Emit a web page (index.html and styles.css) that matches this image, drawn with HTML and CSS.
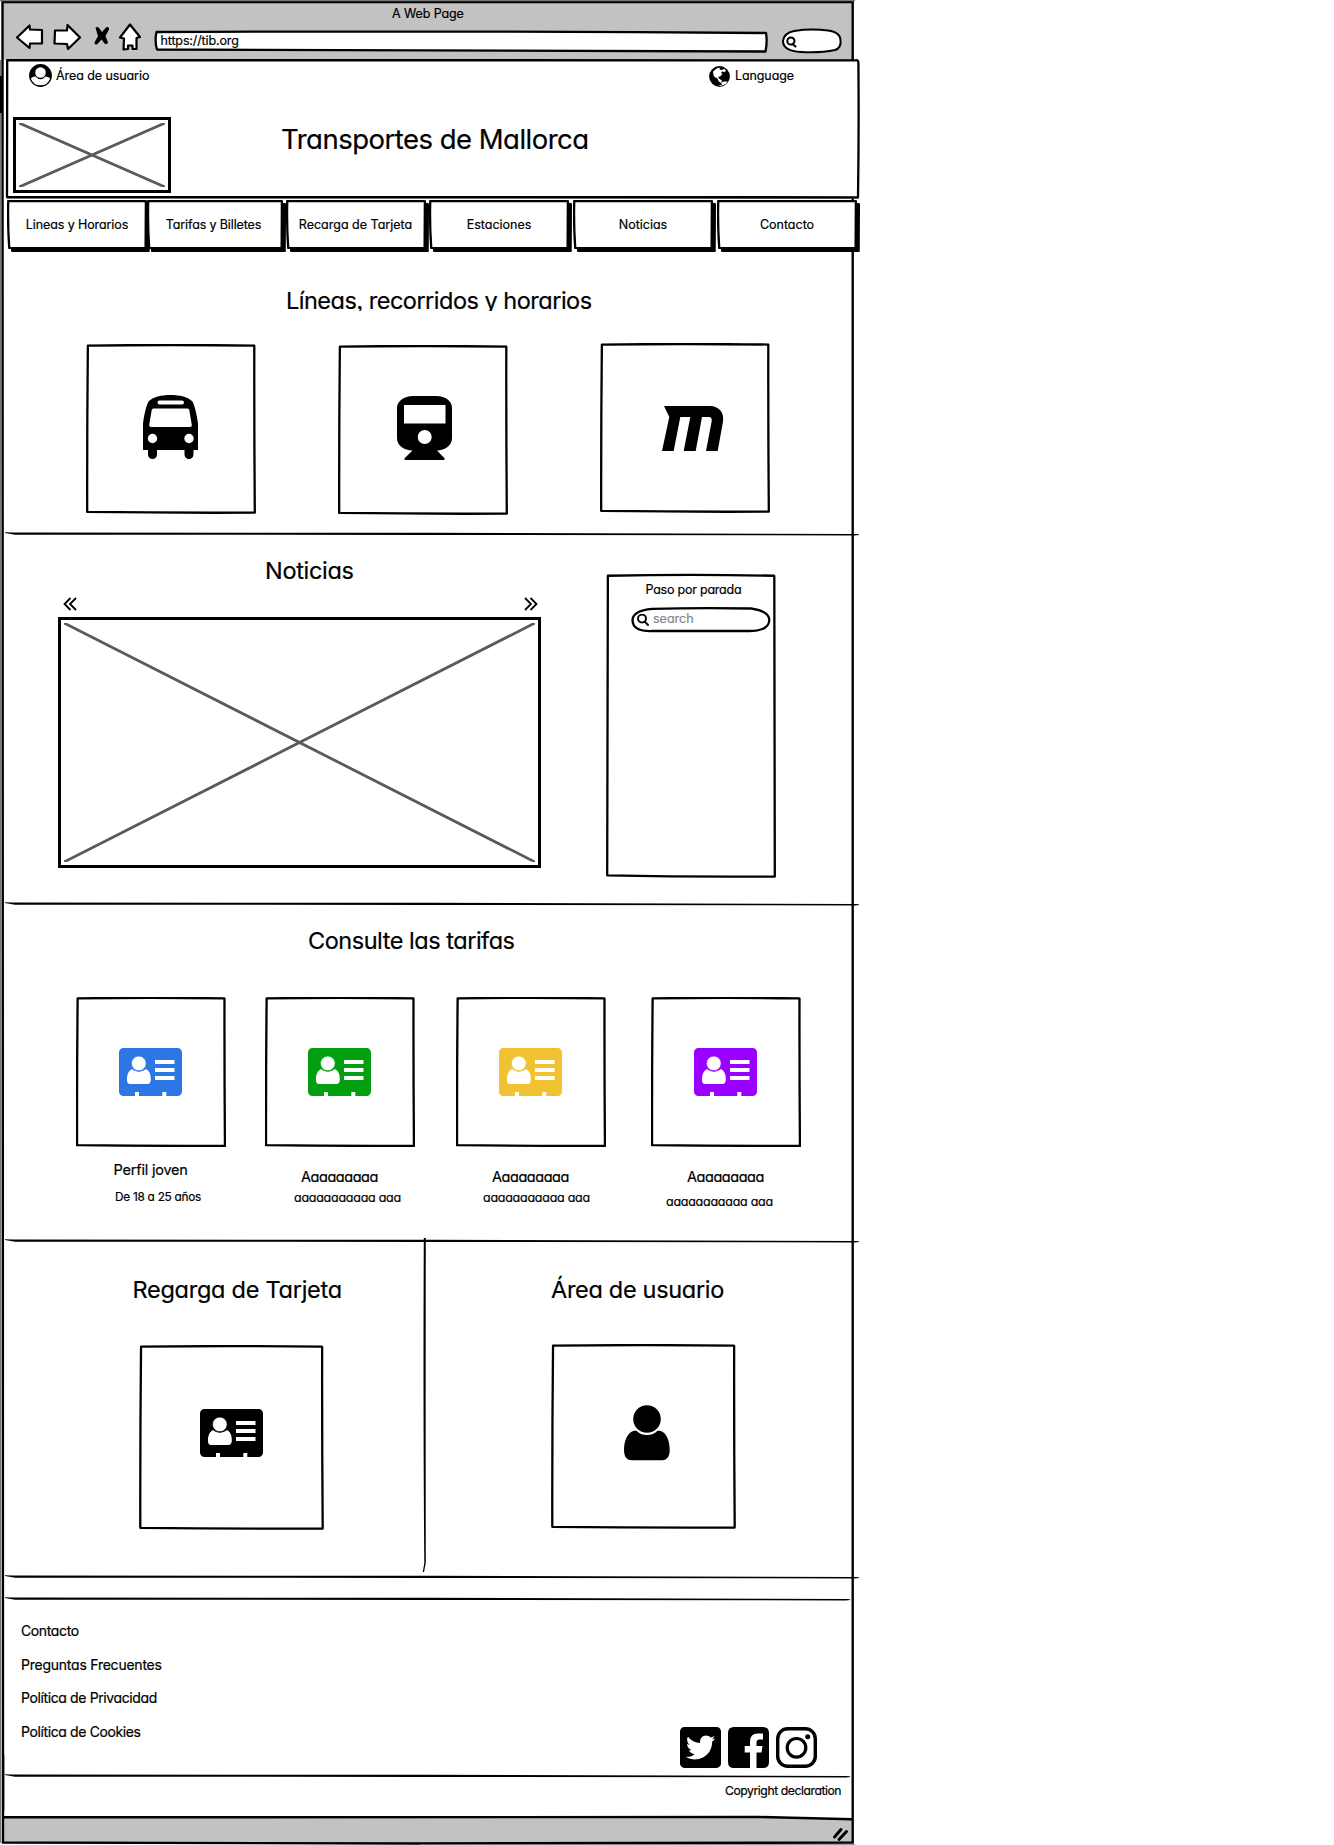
FILE: index.html
```html
<!DOCTYPE html>
<html lang="es">
<head>
<meta charset="utf-8">
<title>Transportes de Mallorca</title>
<link rel="stylesheet" href="styles.css">
</head>
<body>
<svg class="defs" width="0" height="0" aria-hidden="true">
  <symbol id="box" viewBox="0 0 100 100" preserveAspectRatio="none">
    <path class="ink" d="M1.1 .9 Q50 .3 98.700 .9 Q99 .8 99 1.400 Q98.900 50 99.300 99.200 Q50 99.400 .7 98.800 Q.6 50 1.100 .9Z"/>
  </symbol>
  <symbol id="button" viewBox="0 0 100 100" preserveAspectRatio="none">
    <path class="ink fill" d="M.9 2 L99.2 2.500 L99 98 Q50 99 1.600 98 Q.4 50 .9 2Z"/>
  </symbol>
  <symbol id="cross" viewBox="0 0 100 100" preserveAspectRatio="none">
    <path class="grey" d="M0 0L100 100M0 100L100 0"/>
  </symbol>
  <symbol id="rule" viewBox="0 0 854 4" preserveAspectRatio="none">
    <path d="M0 .2 L7 .6 L427 .8 L850 1.900 L854 2.200 V3.100 L850 3.400 L427 2.900 L10 2.800 L0 .9Z"/>
  </symbol>
  <symbol id="card" viewBox="0 0 63 48">
    <path fill="currentColor" d="M4.500 0H58.500A4.500 4.500 0 0 1 63 4.500V43.500A4.500 4.500 0 0 1 58.500 48H47.300V44H43.300V48H20V44H16V48H4.500A4.500 4.500 0 0 1 0 43.500V4.500A4.500 4.500 0 0 1 4.500 0Z"/>
    <path fill="#fff" d="M13 21C17 24.500 22.500 24.500 27 21C31 23 32 28 31.800 32Q31.500 36 28.500 36H11Q8 36 8 32C7.800 28 9 23 13 21Z"/>
    <circle cx="19.800" cy="15.400" r="7.400" fill="#fff" stroke="currentColor" stroke-width=".8"/>
    <path fill="#fff" d="M36 12H55.500V16H36ZM36 20H55.500V24H36ZM36 28H55.500V32H36Z"/>
  </symbol>
  <symbol id="lens" viewBox="0 0 12 12">
    <path d="M9 4.600A4 4 0 1 1 1 4.600A4 4 0 1 1 9 4.600M7.800 7.600L11 11" fill="none" stroke="#000" stroke-width="1.900" stroke-linecap="round"/>
  </symbol>
</svg>

<div class="browser">
  <svg class="frame" width="860" height="1845" viewBox="0 0 860 1845" aria-hidden="true">
    <path fill="#c2c2c2" d="M2 2H853V60H2ZM3 1817L700 1816.500L853 1819V1843H3Z"/>
    <path class="line" d="M2.500 2H852.700V1842.500L420 1843.500L3 1842.500ZM3 1817.300Q400 1817.500 760 1817L852 1819.300"/>
    <path class="haze" d="M0 .7H855M.5 60V1843M420 1845H855"/>
    <path d="M0 76H2V113H0ZM3 1755H4.300V1811H3Z"/>
  </svg>

  <div class="chrome">
    <p class="caption">A Web Page</p>
    <div class="toolbar">
      <svg class="tools" width="128" height="30" viewBox="15 22 128 30">
        <g fill="#fff" stroke="#000" stroke-width="2.200" stroke-linejoin="round">
          <path d="M17 37.500L29.500 25.500L30 29.500L42 30L42 43.500L30 43.500L29.500 48Z"/>
          <path d="M80 37.500L67.500 25L67 30.500L55 30.500L54.500 43.500L67 44L68 49Z"/>
          <path d="M130 24.500L140 37L136.500 38L136.500 49H132.500V45.500H128V49L123.500 49.500L124 38.500L120 37.500Z"/>
        </g>
        <path d="M95.500 28Q97 26 99 28L102 32L106.500 27Q109.500 26.500 109 29.500L105.500 36L108 42.500Q107 45.500 104.500 43.500L101.500 39.500L97.500 44Q94.500 45.500 94.500 42.500L98 36Z"/>
      </svg>
      <div class="url">
        <svg class="back" width="614" height="24" viewBox="0 0 614 24"><path class="ink fill" d="M2.500 3Q300 1.700 612 4Q613.500 13 611.500 22.500L3 20.500Q.5 12 2.500 3Z"/></svg>
        <span>https://tib.org</span>
      </div>
      <svg class="find" width="62" height="26" viewBox="0 0 62 26">
        <path fill="#fff" stroke="#000" stroke-width="2" d="M2 13Q3 5 13 3Q30 .5 47 2.500Q59 4 59.500 12Q60.500 20 54 22Q40 25 20 24Q2 23 2 13Z"/>
        <path fill="none" stroke="#000" stroke-width="2" stroke-linecap="round" d="M13.500 13A3.600 3.600 0 1 1 6.300 13A3.600 3.600 0 1 1 13.500 13M11.500 16L14.500 18.500"/>
      </svg>
    </div>
  </div>

  <header class="header">
    <svg class="back" width="854" height="141" viewBox="0 0 854 141"><path class="haze" d="M1 139H853"/><path class="ink fill" d="M1.200 1.200Q400 .8 850 1.300Q852.400 1 852.400 4Q853 70 852 138.300Q430 137 1 138Z"/></svg>
    <div class="topline">
      <svg width="23" height="23" viewBox="0 0 23 23">
        <circle cx="11.500" cy="11.500" r="11.400"/>
        <path fill="#fff" d="M1.800 14.500Q4 12 6.500 12.500Q11.500 18 16.500 12.500Q19.500 12.500 21.200 14.500A10.300 10.300 0 0 1 1.800 14.500Z"/>
        <circle cx="11.500" cy="8.500" r="5.300" fill="#fff"/>
      </svg>
      <span class="account">Área de usuario</span>
      <svg class="globe" width="21" height="21" viewBox="0 0 21 21">
        <circle cx="10.500" cy="10.500" r="10.400"/>
        <path fill="#fff" d="M4 5.500L8 2.200L11 1.800L10.500 3.500L13 4L15.500 2.800L17 5L15 6.200L13.500 5.200L12 7L13.500 8L11 10.500L9 11L10.500 13L13 14.500L12 17L14.500 15.500L18.500 15.500L17 18L11.500 20L13 18L9.500 15L8.500 12.500L5.500 11L4.500 9ZM9 20L11.500 19.300L12.500 20Z"/>
      </svg>
      <span class="language">Language</span>
    </div>
    <div class="brand">
      <div class="picture logo"><svg class="cross"><use href="#cross"/></svg></div>
      <h1>Transportes de Mallorca</h1>
    </div>
  </header>

  <nav class="nav">
    <a><svg class="back"><use href="#button"/></svg><span class="n1">Lineas y Horarios</span></a>
    <a class="narrow"><svg class="back"><use href="#button"/></svg><span class="n2">Tarifas y Billetes</span></a>
    <a><svg class="back"><use href="#button"/></svg><span>Recarga de Tarjeta</span></a>
    <a><svg class="back"><use href="#button"/></svg><span>Estaciones</span></a>
    <a><svg class="back"><use href="#button"/></svg><span>Noticias</span></a>
    <a><svg class="back"><use href="#button"/></svg><span>Contacto</span></a>
  </nav>

  <section class="lines">
    <h2 class="h-lines">Líneas, recorridos y horarios</h2>
    <div class="tiles">
      <div class="box"><svg class="back"><use href="#box"/></svg>
        <svg class="bus" width="55" height="64" viewBox="0 0 55 64"><path fill-rule="evenodd" d="M0 55V29C1 19 4 9 5.500 6.500C10 2 18 0 27.500 0S45 2 49.500 6.500C51 9 54 19 55 29V55H50.500V59.500A4.500 4.500 0 0 1 41.500 59.500V55H14V59.500A4.500 4.500 0 0 1 5 59.500V55ZM16.500 5.500A2 2 0 0 0 16.500 9.500H39A2 2 0 0 0 39 5.500ZM10.500 13.500Q9 13.500 8.700 15L6.200 30Q6 32 8 32H47Q49 32 48.800 30L46.300 15Q46 13.500 44.500 13.500ZM4.800 43.500A4.700 4.700 0 1 0 14.200 43.500A4.700 4.700 0 1 0 4.800 43.500ZM41.300 43.500A4.700 4.700 0 1 0 50.700 43.500A4.700 4.700 0 1 0 41.300 43.500Z"/></svg>
      </div>
      <div class="box"><svg class="back"><use href="#box"/></svg>
        <svg class="train" width="55" height="64" viewBox="0 0 55 64"><path fill-rule="evenodd" d="M16 0H39C49 0 55 5 55 12V42C55 50 48 54 40 54.500L47.300 62Q48.300 64 46.500 64H8.500Q6.700 64 7.800 62L15.500 54.500C7 54 0 50 0 42V12C0 5 7 0 16 0ZM7 9V27.500H48.500V9ZM20.700 41A7 7 0 1 0 34.700 41A7 7 0 1 0 20.700 41Z"/></svg>
      </div>
      <div class="box"><svg class="back"><use href="#box"/></svg>
        <svg class="metro" width="62" height="45" viewBox="0 0 62 45"><path d="M2 0H48C57 0 62.500 7 61 15.500L55.700 45H44L49.700 15C50 12 49 11 47 11H40L33.700 45H21.700L28.300 11H18.300L11.700 45H0L7.300 11Z"/></svg>
      </div>
    </div>
  </section>
  <svg class="rule"><use href="#rule"/></svg>

  <section class="news">
    <div class="carousel">
      <h2 class="h-news">Noticias</h2>
      <div class="arrows">
        <svg width="14" height="14" viewBox="0 0 14 14"><path d="M7.500 1L1.500 7L7.500 13M13 1L7 7L13 13"/></svg>
        <svg width="14" height="14" viewBox="0 0 14 14"><path d="M1 1L7 7L1 13M6.500 1L12.500 7L6.500 13"/></svg>
      </div>
      <div class="picture slide"><svg class="cross"><use href="#cross"/></svg></div>
    </div>
    <aside class="stop">
      <svg class="back"><use href="#box"/></svg>
      <p class="stop-title">Paso por parada</p>
      <div class="search">
        <svg class="back" width="140" height="26" viewBox="0 0 140 26"><path class="ink" d="M21 1.800Q70 .5 120 1.500Q138 4 138.300 13Q138 24 118 24L22 24Q1.500 25 1.500 13Q2 3.500 21 1.800Z"/></svg>
        <svg width="12" height="12"><use href="#lens"/></svg>
        <span>search</span>
      </div>
    </aside>
  </section>
  <svg class="rule"><use href="#rule"/></svg>

  <section class="fares">
    <h2 class="h-fares">Consulte las tarifas</h2>
    <div class="fare-list">
      <article class="blue"><div class="box"><svg class="back"><use href="#box"/></svg><svg class="card"><use href="#card"/></svg></div>
        <h3 class="young">Perfil joven</h3><p class="ages">De 18 a 25 años</p></article>
      <article class="green"><div class="box"><svg class="back"><use href="#box"/></svg><svg class="card"><use href="#card"/></svg></div>
        <h3>Aaaaaaaaa</h3><p>aaaaaaaaaaa aaa</p></article>
      <article class="yellow"><div class="box"><svg class="back"><use href="#box"/></svg><svg class="card"><use href="#card"/></svg></div>
        <h3>Aaaaaaaaa</h3><p>aaaaaaaaaaa aaa</p></article>
      <article class="purple"><div class="box"><svg class="back"><use href="#box"/></svg><svg class="card"><use href="#card"/></svg></div>
        <h3>Aaaaaaaaa</h3><p>aaaaaaaaaaa aaa</p></article>
    </div>
  </section>
  <svg class="rule"><use href="#rule"/></svg>

  <section class="access">
    <div class="recharge">
      <h2 class="h-recharge">Regarga de Tarjeta</h2>
      <div class="box"><svg class="back"><use href="#box"/></svg><svg class="card"><use href="#card"/></svg></div>
    </div>
    <svg class="split" width="5" height="335" viewBox="0 0 5 335"><path d="M1.800 0L3.800 0Q3.500 170 3.800 325L2 334L.8 334L2.300 325Q1 170 1.800 0Z"/></svg>
    <div class="user">
      <h2 class="h-user">Área de usuario</h2>
      <div class="box"><svg class="back"><use href="#box"/></svg>
        <svg class="person" width="46" height="56" viewBox="0 0 46 56"><circle cx="23" cy="14" r="13.800"/><path d="M10 25.800H12.500C17 31.500 29 31.500 33.500 25.800H36C43 27.500 45.700 37 45.700 45C45.700 51 43 55.300 38.500 55.300H7.500C2.500 55.300 0 51 0 45C0 37 3 27.500 10 25.800Z"/></svg>
      </div>
    </div>
  </section>
  <svg class="rule"><use href="#rule"/></svg>
  <svg class="rule short"><use href="#rule"/></svg>

  <footer>
    <div class="foot">
      <ul>
        <li class="f1">Contacto</li>
        <li class="f2">Preguntas Frecuentes</li>
        <li class="f3">Política de Privacidad</li>
        <li class="f4">Política de Cookies</li>
      </ul>
      <div class="social">
        <svg width="41" height="41" viewBox="0 32 448 448"><path d="M400 32H48C21.500 32 0 53.500 0 80v352c0 26.500 21.500 48 48 48h352c26.500 0 48-21.500 48-48V80c0-26.500-21.500-48-48-48zm-48.900 158.800c.2 2.800.2 5.700.2 8.500 0 86.700-66 186.600-186.600 186.600-37.200 0-71.700-10.800-100.700-29.400 5.300.6 10.400.8 15.800.8 30.700 0 58.900-10.400 81.400-28-28.800-.6-53-19.500-61.300-45.500 10.100 1.500 19.200 1.500 29.600-1.200-30-6.100-52.500-32.500-52.500-64.400v-.8c8.700 4.900 18.900 7.900 29.600 8.300a65.447 65.447 0 0 1-29.200-54.600c0-12.200 3.200-23.400 8.900-33.100 32.300 39.800 80.800 65.800 135.200 68.600-9.300-44.500 24-80.600 64-80.600 18.900 0 35.900 7.900 47.900 20.700 14.800-2.800 29-8.300 41.600-15.800-4.900 15.200-15.200 28-28.800 36.100 13.200-1.400 26-5.100 37.800-10.200-8.900 13.100-20.100 24.700-32.900 34z"/></svg>
        <svg width="41" height="41" viewBox="0 0 41 41"><path d="M6 0H35Q41 0 41 6V35Q41 41 35 41H28.500V25.500H33.500L34.500 19H28.500V15.500Q28.500 12.500 31.500 12.500H35V6.500H30Q22 6.500 22 14.500V19H16.700V25.500H22V41H6Q0 41 0 35V6Q0 0 6 0Z"/></svg>
        <svg width="41" height="41" viewBox="0 0 41 41"><rect x="1.700" y="1.700" width="37.600" height="37.600" rx="10" fill="none" stroke="#000" stroke-width="3.400"/><circle cx="20.500" cy="20.800" r="9.300" fill="none" stroke="#000" stroke-width="3.200"/><circle cx="31.700" cy="9.700" r="2.500"/></svg>
      </div>
    </div>
    <svg class="rule short last"><use href="#rule"/></svg>
    <p class="copyright">Copyright declaration</p>
    <svg class="grip" width="18" height="15" viewBox="0 0 18 15"><path d="M2.500 10L9 2.500M7 12.500L14.500 4.500" stroke="#000" stroke-width="3" stroke-linecap="round"/></svg>
  </footer>
</div>
</body>
</html>
```
FILE: styles.css
```css
* { box-sizing: border-box; }
body {
  margin: 0;
  background: #fff;
  color: #000;
  font-family: Inter, Lato, sans-serif;
  font-feature-settings: "cv11", "ss03";
  font-size: 12.5px;
  line-height: 20px;
  white-space: nowrap;
  -webkit-text-stroke: .2px currentColor;
}
h1, h2, h3, p, ul { margin: 0; padding: 0; font-weight: 400; }
svg { display: block; flex: none; overflow: visible; }
.defs { position: absolute; }

.ink { fill: none; stroke: #000; stroke-width: 2.3px; stroke-linejoin: round; vector-effect: non-scaling-stroke; }
.ink.fill { fill: #fff; }
.grey { fill: none; stroke: #5a5a5a; stroke-width: 2.8px; stroke-linecap: round; vector-effect: non-scaling-stroke; }
.line { fill: none; stroke: #000; stroke-width: 2.4px; }
.haze { fill: none; stroke: #777; stroke-width: 1.3px; }
.back { position: absolute; left: 0; top: 0; width: 100%; height: 100%; z-index: -1; }

.browser { position: relative; z-index: 0; width: 860px; height: 1845px; display: flex; flex-direction: column; }
.frame { position: absolute; left: 0; top: 0; z-index: -3; }

.chrome { height: 59px; padding-top: 4px; }
.caption { padding-left: 392px; letter-spacing: -.1px; }
.toolbar { display: flex; padding-left: 15px; height: 30px; margin-top: -2px; }
.url { position: relative; z-index: 0; width: 614px; height: 24px; margin: 7px 0 0 11px; padding: 2px 0 0 6.5px; letter-spacing: -.13px; }
.find { margin: 6px 0 0 13px; }

.header { position: relative; z-index: 0; height: 141px; margin-left: 6px; width: 854px; }
.topline { display: flex; padding: 5px 0 0 23px; }
.account { margin: 2px 0 0 4px; letter-spacing: -.08px; }
.globe { margin: 2px 0 0 auto; }
.language { width: 125px; margin: 2px 0 0 5px; letter-spacing: -.1px; }
.brand { display: flex; padding-left: 7px; margin-top: 30px; }
.picture { border: 3px solid #000; background: #fff; padding: 3px; }
.cross { width: 100%; height: 100%; }
.logo { width: 158px; height: 76px; }
h1 { font-size: 27.5px; line-height: 36px; margin: 3.5px 0 0 110px; letter-spacing: -.51px; }

.nav { display: grid; grid-template-columns: 140px 138.5px 143.5px 144px 144px 144px; height: 52px; padding-left: 7px; }
.nav a { position: relative; z-index: 0; display: flex; justify-content: center; width: 140px; height: 49px; padding-top: 15px; }
.nav .narrow { width: 136px; }
.nav .back { filter: drop-shadow(3px 3px 0 #000); }
.n1 { letter-spacing: -.1px; }
.n2 { letter-spacing: -.13px; margin-left: -3px; }

h2 { font-size: 23.5px; line-height: 30px; }
.box { position: relative; z-index: 0; width: 170px; height: 170px; display: flex; align-items: center; justify-content: center; }

.lines { height: 280px; padding-top: 34px; }
.h-lines { margin-left: 286px; height: 24.5px; overflow: hidden; letter-spacing: -.5px; }
.tiles { display: flex; padding: 33px 0 0 86px; }
.tiles .box:nth-child(2) { margin: 1px 0 0 82px; }
.tiles .box:nth-child(3) { margin: -1px 0 0 92px; }
.bus { margin: -3px 0 0 -1.5px; }
.train { margin: -4px 0 0 3px; }
.metro { margin: 2.5px 0 0 15px; }
.rule { width: 854px; height: 4px; margin-left: 5px; }

.news { display: flex; height: 366px; }
.carousel { width: 483px; margin-left: 58px; padding-top: 20px; }
.h-news { margin-left: 207px; letter-spacing: -.3px; }
.arrows { display: flex; justify-content: space-between; padding: 11px 3px 0 5px; }
.arrows path { fill: none; stroke: #000; stroke-width: 1.8px; }
.slide { height: 251px; margin-top: 6px; }
.stop { position: relative; z-index: 0; width: 170px; height: 306px; margin: 37px 0 0 65px; padding-top: 7px; }
.stop-title { margin-left: 39.5px; letter-spacing: -.23px; }
.search { position: relative; z-index: 0; display: flex; align-items: center; width: 140px; height: 26px; margin: 7px 0 0 24.5px; padding-left: 6px; gap: 4.5px; color: #85858f; }
.search span { margin-top: -2px; }

.fares { height: 333px; padding-top: 20px; }
.h-fares { margin-left: 308px; letter-spacing: -.47px; }
.fare-list { display: flex; padding: 41px 0 0 76px; }
.fares .box { width: 150px; height: 150px; }
.card { width: 63px; height: 48px; margin-left: -2px; }
article { width: 150px; }
.blue { color: #2c77e5; margin-right: 39px; }
.green { color: #039f10; margin-right: 41px; }
.yellow { color: #f1c232; margin-right: 45px; }
.purple { color: #9900ff; }
h3, article p { color: #000; }
h3 { font-size: 14.5px; line-height: 20px; margin: 20px 0 0 36px; letter-spacing: -.45px; }
article p { margin: 1px 0 0 29px; letter-spacing: -.25px; }
.yellow p { margin-left: 27px; }
.purple p { margin: 5px 0 0 15px; }
.young { margin: 13px 0 0 37.5px; letter-spacing: -.2px; }
.ages { margin: 7px 0 0 39px; font-size: 11.8px; letter-spacing: -.25px; }

.access { display: flex; height: 331.5px; }
.recharge { width: 421.5px; padding-top: 32px; }
.h-recharge { margin-left: 132.5px; letter-spacing: -.26px; }
.access .box { width: 185px; height: 185px; }
.recharge .box { margin: 40px 0 0 139px; }
.recharge .card { margin: -10px 0 0 0; }
.split { margin-top: -5px; }
.user { padding-top: 32px; margin-left: 124.5px; }
.h-user { letter-spacing: -.31px; }
.user .box { margin-top: 39px; }
.person { margin: -7px 0 0 7px; }

.short { width: 845px; margin-top: 18px; }
.foot { display: flex; justify-content: space-between; height: 173px; padding: 20.5px 43px 0 21px; }
ul { list-style: none; font-size: 14px; }
li { height: 33.7px; }
.f1, .f3, .f4 { letter-spacing: -.38px; }
.f2 { letter-spacing: -.235px; }
.social { display: flex; gap: 7px; margin-top: 105.5px; }
.last { margin-top: 0; }
.copyright { margin: 3px 0 0 725px; font-size: 12.2px; letter-spacing: -.44px; }
.grip { margin: 26px 0 0 832px; }
```
